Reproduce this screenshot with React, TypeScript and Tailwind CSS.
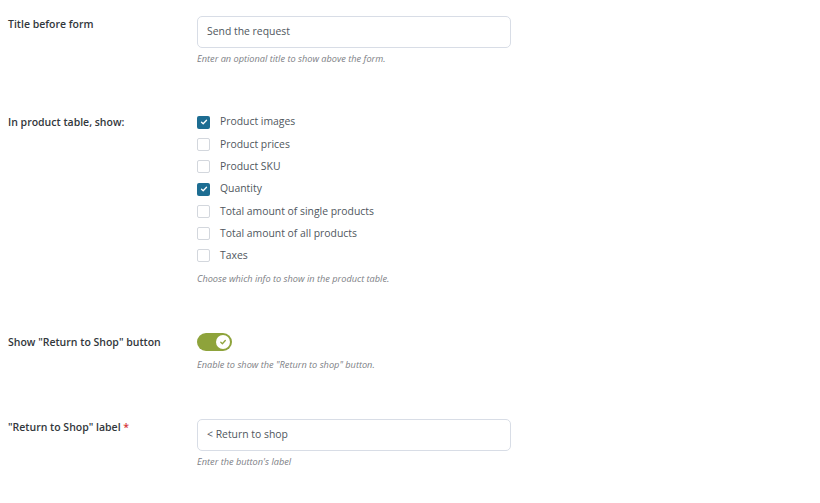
import React from 'react';

const font = { fontFamily: '"Open Sans", "Liberation Sans", sans-serif' };

const options = [
  { label: 'Product images', checked: true },
  { label: 'Product prices', checked: false },
  { label: 'Product SKU', checked: false },
  { label: 'Quantity', checked: true },
  { label: 'Total amount of single products', checked: false },
  { label: 'Total amount of all products', checked: false },
  { label: 'Taxes', checked: false },
];

const Help: React.FC<{ text: string; className?: string }> = ({ text, className = '' }) => (
  <p className={`text-[9.2px] leading-[12px] italic text-[#7d8085] ${className}`}>{text}</p>
);

const Check: React.FC<{ checked: boolean }> = ({ checked }) =>
  checked ? (
    <span className="flex h-[13px] w-[13px] items-center justify-center rounded-[2px] bg-[#1d6d92]">
      <svg width="8" height="8" viewBox="0 0 8 8" fill="none">
        <path d="M1.5 4.2 3.2 5.8 6.5 2.2" stroke="#fff" strokeWidth="1.3" strokeLinecap="round" strokeLinejoin="round" />
      </svg>
    </span>
  ) : (
    <span className="h-[13px] w-[13px] rounded-[2px] border border-[#d3d7dd] bg-white" />
  );

export default function App() {
  return (
    <div className="min-h-[503px] w-[820px] bg-white text-[#32373c]" style={font}>
      {/* Title before form */}
      <div className="flex pt-[16px]">
        <div className="w-[197px] pl-[8px] text-[10.5px] leading-[16px] font-semibold">Title before form</div>
        <div>
          <div className="flex h-[32px] w-[314px] items-center rounded-[5px] border border-[#d8dde6] bg-white px-[9px] text-[10.4px] text-[#50575e]">
            Send the request
          </div>
          <Help className="mt-[5px]" text="Enter an optional title to show above the form." />
        </div>
      </div>

      {/* Product table */}
      <div className="mt-[46px] flex">
        <div className="w-[197px] pl-[8px] text-[10.5px] leading-[22px] font-semibold">In product table, show:</div>
        <div>
          <ul>
            {options.map((o) => (
              <li key={o.label} className="flex h-[22.3px] items-center gap-[10px] text-[10.4px] text-[#50575e]">
                <Check checked={o.checked} />
                <span>{o.label}</span>
              </li>
            ))}
          </ul>
          <Help className="mt-[6px]" text="Choose which info to show in the product table." />
        </div>
      </div>

      {/* Return to shop toggle */}
      <div className="mt-[48px] flex">
        <div className="w-[197px] pl-[8px] text-[10.5px] leading-[18px] font-semibold">Show "Return to Shop" button</div>
        <div>
          <div className="flex h-[18px] w-[35px] items-center justify-end rounded-full bg-[#8ea33b] pr-[2px]">
            <span className="flex h-[14px] w-[14px] items-center justify-center rounded-full bg-white">
              <svg width="8" height="8" viewBox="0 0 8 8" fill="none">
                <path d="M1.8 4.2 3.4 5.7 6.3 2.5" stroke="#8ea33b" strokeWidth="1.3" strokeLinecap="round" strokeLinejoin="round" />
              </svg>
            </span>
          </div>
          <Help className="mt-[8px]" text={'Enable to show the "Return to shop" button.'} />
        </div>
      </div>

      {/* Return to shop label */}
      <div className="mt-[48px] flex">
        <div className="w-[197px] pl-[8px] text-[10.5px] leading-[16px] font-semibold">
          "Return to Shop" label <span className="text-[#d63638]">*</span>
        </div>
        <div>
          <div className="flex h-[32px] w-[314px] items-center rounded-[5px] border border-[#d8dde6] bg-white px-[9px] text-[10.4px] text-[#50575e]">
            &lt; Return to shop
          </div>
          <Help className="mt-[5px]" text="Enter the button's label" />
        </div>
      </div>
    </div>
  );
}
